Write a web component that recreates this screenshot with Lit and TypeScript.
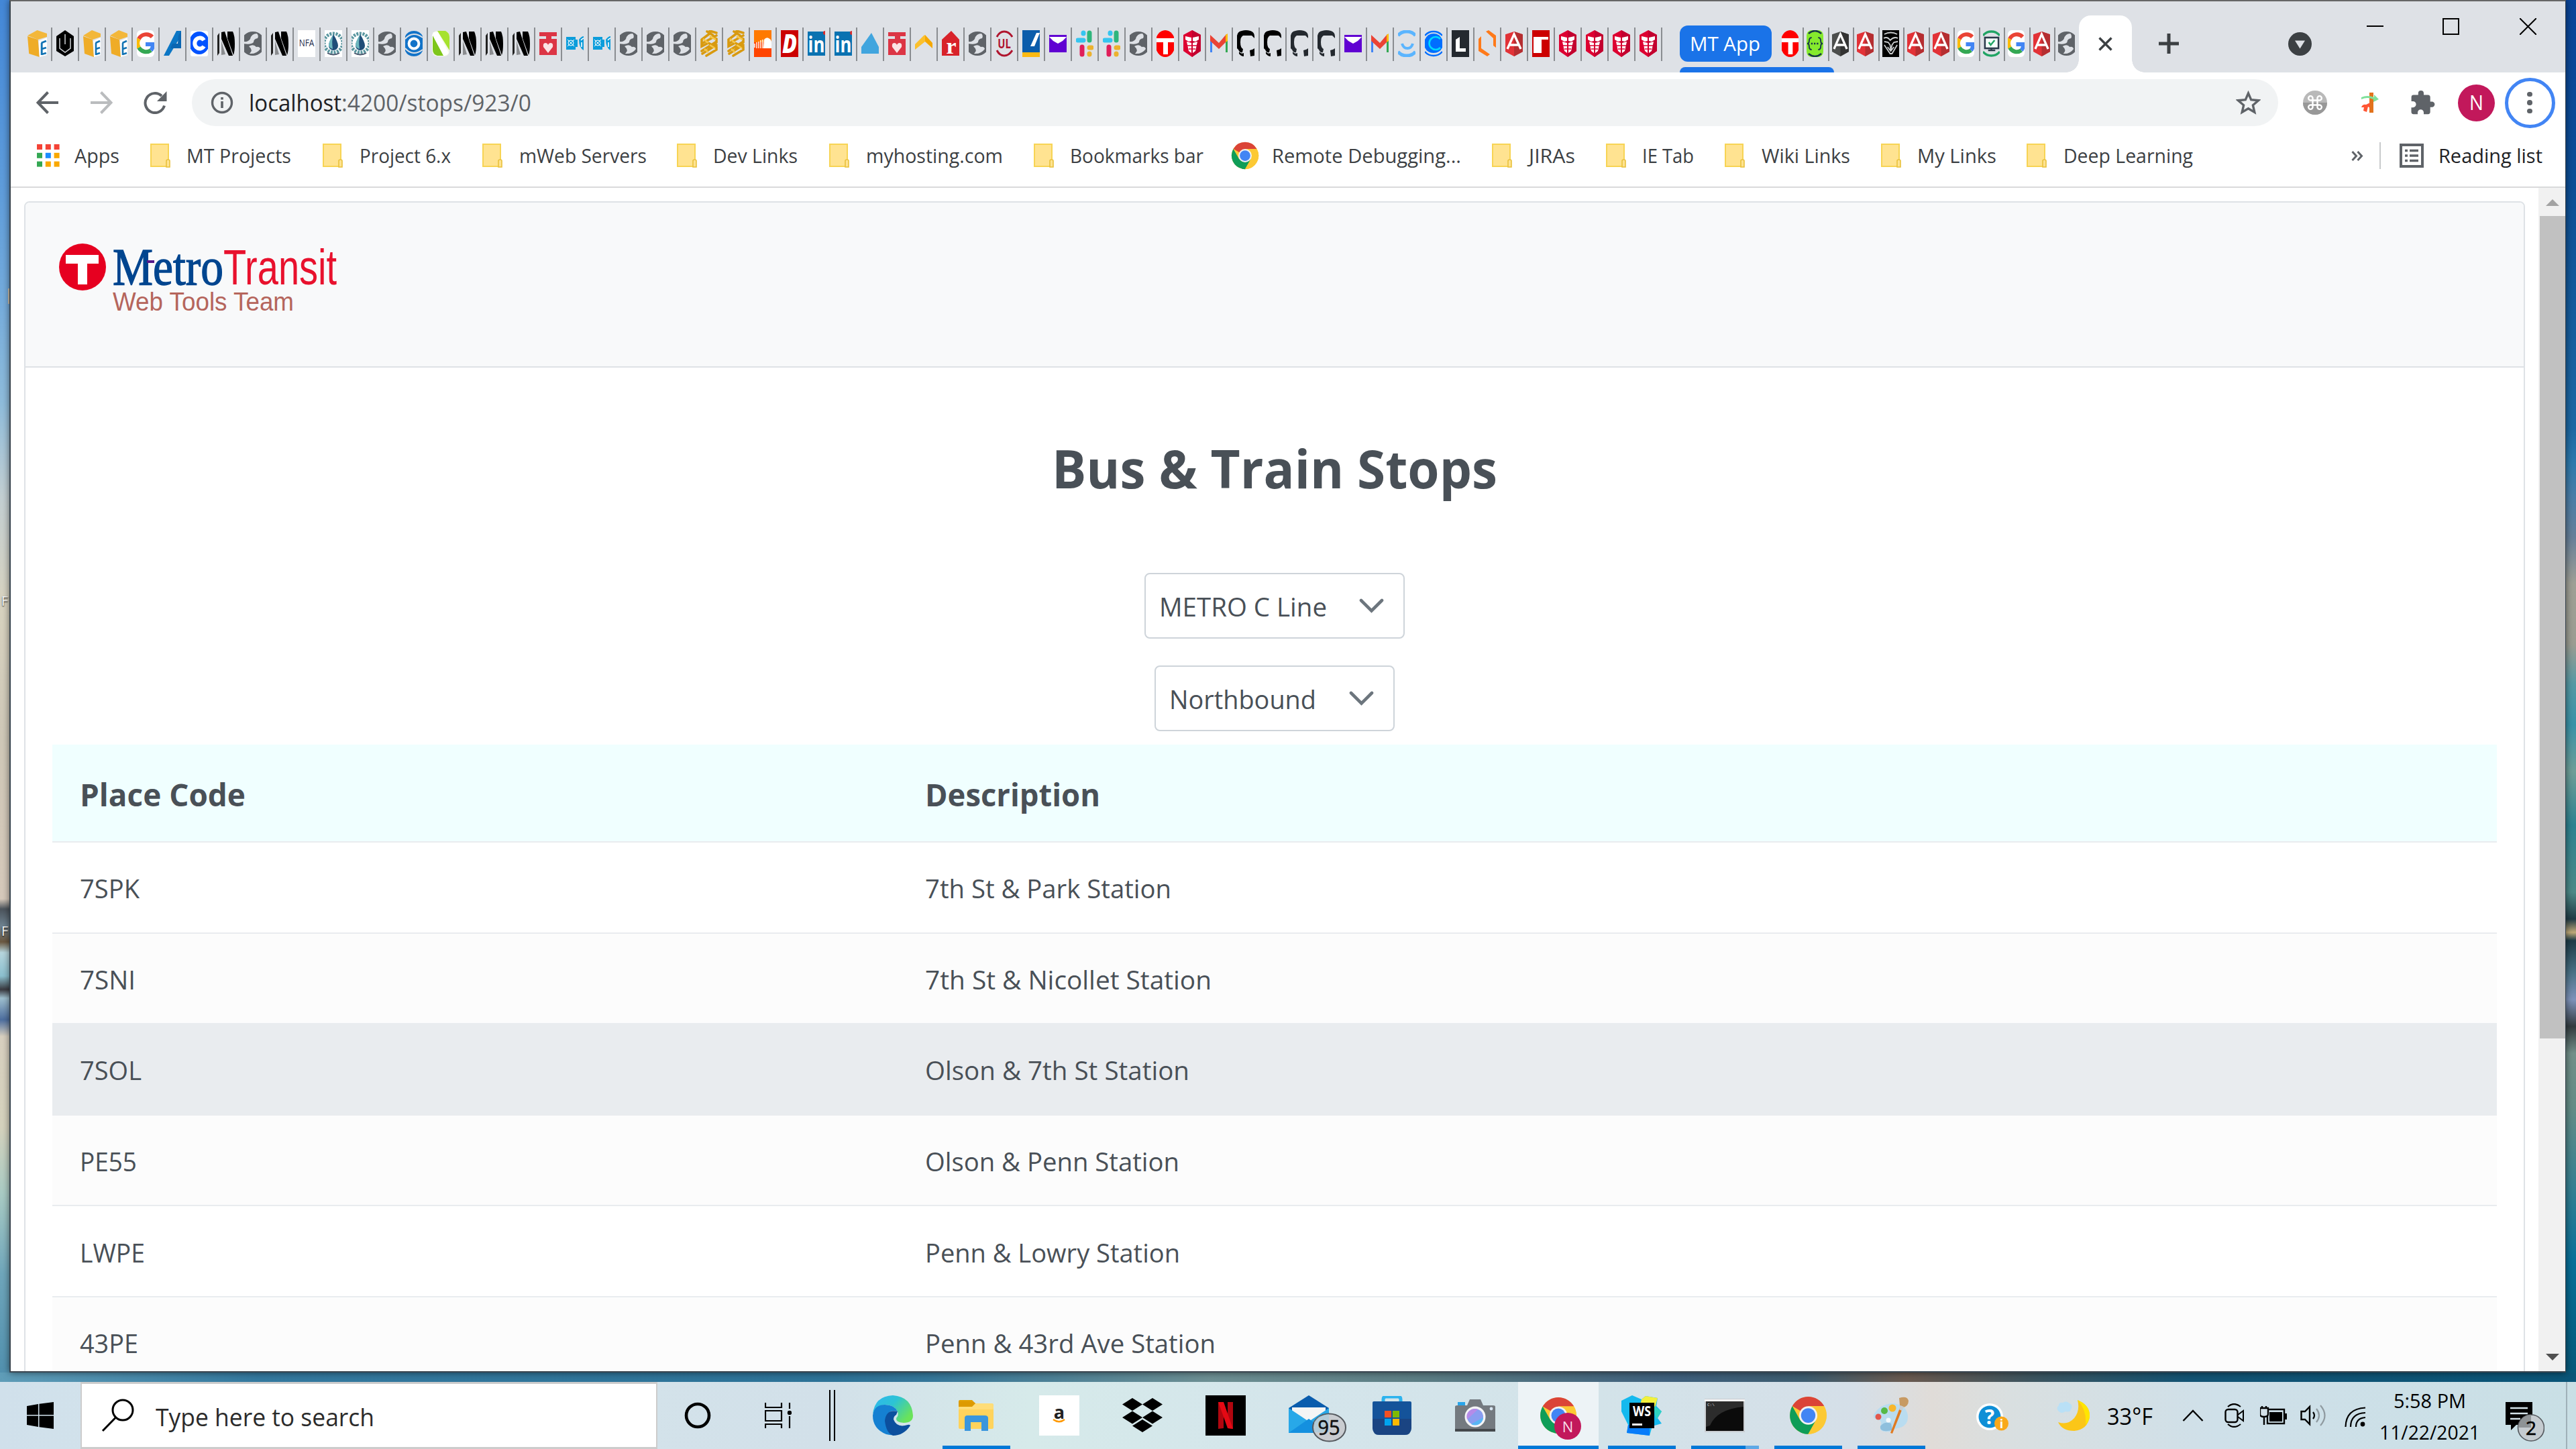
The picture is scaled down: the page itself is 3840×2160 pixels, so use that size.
import { LitElement, html, svg, css, nothing, type TemplateResult } from "lit";
import { customElement, property } from "lit/decorators.js";

/* ---------- text that is set to a given line width ---------- */

@customElement("fit-text")
export class FitText extends LitElement {
  @property() text = "";
  @property({ type: Number }) w = 0;

  static styles = css`
    :host { display: inline-block; flex: none; white-space: nowrap; line-height: 1.2; }
    .t { display: inline-block; transform-origin: 0 50%; white-space: pre; }
  `;

  render() {
    return html`<span class="t">${this.text}</span>`;
  }

  updated() {
    const t = this.renderRoot.querySelector(".t") as HTMLElement;
    t.style.transform = "none";
    const natural = t.getBoundingClientRect().width;
    this.style.width = this.w + "px";
    if (natural > 0) t.style.transform = `scaleX(${this.w / natural})`;
  }
}

const fit = (text: string, w: number, cls = "") =>
  html`<fit-text class=${cls} .text=${text} .w=${w}></fit-text>`;

const icon = (w: number, h: number, body: unknown, vb = `0 0 ${w} ${h}`) =>
  html`<svg class="ico" width=${w} height=${h} viewBox=${vb} preserveAspectRatio="none">${body}</svg>`;

/* ---------- favicons, drawn on a 26 x 40 strip ---------- */

const letter = (t: string, x: number, y: number, size: number, fill: string, extra = "") =>
  svg`<text x=${x} y=${y} font-size=${size} fill=${fill} text-anchor="middle" font-family="Open Sans, sans-serif" style=${"font-weight:700;" + extra}>${t}</text>`;

const narrow = (x: number, y: number, k: number, body: unknown) =>
  svg`<g transform=${`translate(${x} ${y}) scale(${k} 1)`}>${body}</g>`;

const angular = (a: string, b: string) => svg`
  <path d="M13 2 L31 8 L28 31 L13 39 L-2 31 L-5 8Z" fill=${a}/>
  <path d="M13 2 L31 8 L28 31 L13 39Z" fill=${b}/>
  <path d="M3 28 L13 6 L23 28 M7 22 H19" fill="none" stroke="#fff" stroke-width="3.4"/>`;

const nLogo = svg`
  <path d="M0 8 L3 4 V34 L0 38Z" fill="#222"/>
  <path d="M6 3 L11 2 L23 38 H17 L6 13Z" fill="#000"/>
  <path d="M15 2 H23 Q26 8 26 20 T24 37 L15 12Z" fill="#000"/>
  <path d="M6 16 L12 36 L6 37Z" fill="#8b8d90"/>`;

const octo = (c: string) => svg`
  <path d="M0 20 V8 Q1 2 7 1 Q13 -1 20 1 Q26 3 26 9 V12 L22 8 H9 Q5 10 5 18 Q5 26 9 28 L8 33 Q4 34 2 29 L0 27Z" fill=${c}/>
  <path d="M3 32 Q6 36 10 34 V39 Q6 39 3 35Z M19 30 Q24 29 26 27 V38 L20 39Z" fill=${c}/>`;

const FAV: Record<string, unknown> = {
  box: svg`<path d="M0 8 L13 0 L26 5 V10 L14 14Z" fill="#f3b73a"/><path d="M0 9 L14 14 L16 40 L2 35Z" fill="#efac27"/>
    <path d="M15 16 L26 11 V37 L16 40Z" fill="#fff"/><path d="M18.5 19 L25 16 M19 19 V37 M19 28 L25 26 M19 36 L25 34" stroke="#1273b4" stroke-width="2.6" fill="none"/>`,
  hex: svg`<path d="M13 0 L26 9 V31 L13 39 L0 31 V9Z" fill="#000"/><path d="M13 6 V21 M5 12 V27 L13 33 L21 27 V12" stroke="#cfd2d6" stroke-width="1.5" fill="none"/>`,
  g: svg`<rect width="26" height="40" rx="6" fill="#fff"/>
    <g fill="none" stroke-width="6"><path d="M23 10 A12.5 12.5 0 0 0 3 13" stroke="#ea4335"/><path d="M3 13 A12.5 12.5 0 0 0 3 26" stroke="#fbbc05"/><path d="M3 26 A12.5 12.5 0 0 0 21 30" stroke="#34a853"/><path d="M21 30 Q24 27 24 21 H13" stroke="#4285f4"/></g>`,
  slantA: svg`<path d="M0 38 L19 1 H26 V8 L8 38Z" fill="#0b76c5"/><path d="M22 8 L26 1 V27 H10 L13 20 H21Z" fill="#0a66b2"/>`,
  coin: svg`<rect x="0" y="1" width="26" height="38" rx="3" fill="#fff"/><ellipse cx="13" cy="19" rx="15" ry="17" fill="#0052ff"/><path d="M20 15 A7.5 8 0 1 0 20 24" stroke="#fff" stroke-width="6" fill="none"/>`,
  n: nLogo,
  globe: svg`<circle cx="13" cy="20" r="18" fill="#5f6368"/><path d="M-1 17 Q6 18 9 13 Q11 5 19 5 Q22 8 20 12 Q14 13 14 18 Q10 22 -1 20Z" fill="#dee1e6"/><path d="M7 24 Q14 20 18 25 Q23 24 24 28 Q18 36 8 35 Q14 30 7 24Z" fill="#dee1e6"/>`,
  nfa: svg`<rect width="26" height="40" fill="#fff"/>${narrow(13, 24, 0.85, letter("NFA", 0, 0, 14, "#1b2a4a", "font-weight:400"))}`,
  drop: svg`<rect width="26" height="40" fill="#fff"/><circle cx="13" cy="19" r="14" fill="none" stroke="#5b97a0" stroke-width="5" stroke-dasharray="3 1.6"/><path d="M13 6 Q20 18 20 23 A7 7 0 0 1 6 23 Q6 18 13 6Z" fill="#1f4d78"/><path d="M13 6 Q10 16 12 28 Q6 26 6 22 Q6 17 13 6Z" fill="#6db7be"/><path d="M4 34 Q13 39 22 34" stroke="#46536a" stroke-width="2" fill="none"/>`,
  ring: svg`<path d="M0 9 Q4 1 13 1 T26 9 V31 Q22 39 13 39 T0 31Z" fill="#1273c8"/><path d="M26 11 Q20 6 13 6 T0 13 M26 29 Q20 34 13 34 T0 27" stroke="#dee1e6" stroke-width="2" fill="none"/><circle cx="13" cy="20" r="7.4" fill="none" stroke="#fff" stroke-width="4"/>`,
  greenN: svg`<rect y="1" width="26" height="38" rx="8" fill="#f3f9e8"/><path d="M2 3 H9 L25 34 Q22 38 17 38 L3 12 V35 L0 30 V8Z" fill="#fff"/><path d="M8 1 H20 Q26 4 26 10 V30Z" fill="#a6e22e"/><path d="M1 8 L17 38 H8 Q1 36 1 29Z" fill="#7ec61a"/>`,
  heart: svg`<path d="M0 3 H26 V9 H18 V13 H26 V37 H0 V13 H10 V9 H0Z" fill="#dc3545"/><path d="M13 34 L6 25 Q5 19 9 19 Q12 19 13 22 Q14 19 17 19 Q21 19 20 25Z" fill="#fbe3e5"/>`,
  bcbs: svg`<path d="M0 10 H14 V14 H17 V25 H14 V29 H0Z" fill="#0c9ddb"/><path d="M2 14 L12 24 M12 14 L2 24" stroke="#fff"/><circle cx="7" cy="19" r="4" fill="none" stroke="#fff"/><path d="M19 14 Q23 9 26 9 V30 Q19 26 19 14Z" fill="#0c9ddb"/><path d="M22 15 Q25 12 26 12 M23 18 V25" stroke="#fff" stroke-width="1.6" fill="none"/>`,
  knot: svg`<g fill="none" stroke="#d89a10" stroke-width="3.6" stroke-linecap="round"><path d="M10 2 L18 7 L24 13 V18 L12 26 M24 4 L14 1 M2 14 L14 5 M2 20 L24 8 M2 14 V24 L12 19 L24 26 M2 31 L24 17 M3 35 L24 22 M9 38 L24 29 V24"/></g><path d="M4 13 L12 19 M14 9 L23 14 M6 28 L12 33 M14 22 L22 27" stroke="#f6c749" stroke-width="2.6" fill="none"/>`,
  cloud: svg`<rect width="26" height="40" fill="#ff4400"/><rect width="26" height="18" fill="#ff7a00"/><path d="M15 14 Q18 10 22 12 T26 18 V27 H14Z" fill="#fff"/><path d="M1 20 V26 M4 18 V27 M7 17 V27 M10 15 V27 M13 14 V27" stroke="#fff" stroke-width="1.4"/>`,
  bigD: svg`<rect width="26" height="40" fill="#cb0000"/>${narrow(13, 34, 0.85, letter("D", 0, 0, 38, "#fff", "font-style:italic;font-weight:800"))}`,
  linkedin: svg`<rect y="2" width="26" height="36" fill="#0a72b1"/>${narrow(13, 33, 0.78, letter("in", 0, 0, 33, "#fff"))}<circle cx="26" cy="4" r="3" fill="#d92b2b"/>`,
  tri: svg`<path d="M15 4 L26 25 V35 H0 V25Z" fill="#41a5de"/>`,
  wing: svg`<path d="M0 21 L13 8 L15 7 V17 L0 29Z" fill="#fbc02d"/><path d="M15 7 L26 19 V27 L15 17Z" fill="#f5a800"/>`,
  house: svg`<path d="M14 1 L26 14 V38 H0 V14Z" fill="#d8222a"/><text x="14" y="35" font-size="34" font-family="Liberation Serif, serif" fill="#fff" text-anchor="middle" style="font-weight:700">r</text>`,
  ul: svg`<path d="M2 10 Q6 2 13 2 T25 10 M2 30 Q6 38 13 38 T25 30" stroke="#b0152e" stroke-width="3" fill="none"/>${narrow(13, 27, 0.78, letter("UL", 0, 0, 19, "#b0152e"))}`,
  bluey: svg`<rect width="26" height="40" fill="#0a5cab"/><rect y="33" width="26" height="7" fill="#fdb913"/><path d="M12 24 L21 4 H26 L18 24Z" fill="#fff"/>`,
  mail: svg`<rect y="7" width="26" height="26" fill="#6001d2"/><path d="M0 10 H26 L20 16 L13 20 L6 16Z" fill="#fff"/>`,
  slack: svg`<g stroke-width="7" stroke-linecap="round"><path d="M3 15 H11" stroke="#36c5f0"/><path d="M11 4 V5" stroke="#36c5f0"/><path d="M20 4 V15" stroke="#2eb67d"/><path d="M9 25 V36 M3 25" stroke="#e01e5a"/><path d="M20 26 H23 M20 35 V36" stroke="#ecb22e"/></g>`,
  tRed: svg`<ellipse cx="13" cy="20" rx="15" ry="20" fill="#f00"/><path d="M0 12 H26 V18 H17 V36 H10 V18 H0Z" fill="#fff"/>`,
  prime: svg`<path d="M13 0 L26 7 V31 L13 40 L0 31 V7Z" fill="#dd0031"/><path d="M13 0 L26 7 V31 L13 40Z" fill="#c3002f"/><path d="M3 9 L12 11 V16 L8 17 L3 14Z M23 9 L14 11 V16 L18 17 L23 14Z M5 17 L12 19 V34 L8 31Z M21 17 L14 19 V34 L18 31Z" fill="#fff"/><path d="M6 23 L20 23 M8 28 H18" stroke="#dd0031" stroke-width="1.5"/>`,
  gmail: svg`<path d="M0 14 H3 V33 H0Z" fill="#4285f4"/><path d="M23 14 H26 V33 H23Z" fill="#34a853"/><path d="M0 7 L13 19 L24 6 V17 L13 28 L0 16Z" fill="#ea4335"/><path d="M23 7 L26 5 V16 L23 18Z" fill="#fbbc05"/>`,
  hubB: octo("#000"),
  hubG: octo("#24292f"),
  smile: svg`<path d="M0 8 Q5 2 13 2 T26 8 M0 32 Q5 38 13 38 T26 32" stroke="#5bb5ff" stroke-width="5" fill="none"/><path d="M6 20 Q8 27 14 27 T22 20" stroke="#5bb5ff" stroke-width="4" fill="none"/>`,
  cyan: svg`<path d="M0 8 Q5 2 13 2 T26 8 M0 32 Q5 38 13 38 T26 32" stroke="#006eff" stroke-width="2.4" fill="none"/><path d="M0 14 Q4 5 13 5 T26 14 V26 Q22 34 13 34 T0 26Z" fill="#006eff"/><path d="M23 13 A9.5 9.5 0 1 0 23 26" stroke="#00d9ff" stroke-width="2.6" fill="none"/>`,
  bigL: svg`<rect width="26" height="40" fill="#24292f"/><path d="M6 14 L12 10 V27 H21 V32 H6Z" fill="#fff"/>`,
  orange: svg`<path d="M0 13 L4 9 V27 L17 36 L13 39 L0 31Z M11 2 L15 0 L26 8 V26 L22 23 V12Z" fill="#ff7a1a"/>`,
  ngRed: angular("#e23237", "#b52e31"),
  ngDark: angular("#4d4f4e", "#333"),
  tSquare: svg`<rect width="26" height="40" fill="#cc0000"/><path d="M2 10 H24 V14 H14 V34 H2Z" fill="#fff"/>`,
  swagger: svg`<rect width="26" height="40" rx="8" fill="#85ea2d"/><path d="M3 5 Q13 -3 23 5 M3 35 Q13 43 23 35" stroke="#173647" stroke-width="2.5" fill="none"/><path d="M8 11 Q4 11 4 16 Q4 20 1 20 Q4 20 4 24 Q4 29 8 29 M18 11 Q22 11 22 16 Q22 20 25 20 Q22 20 22 24 Q22 29 18 29" fill="none" stroke="#173647" stroke-width="2"/><path d="M7 20 H20" stroke="#173647" stroke-width="2.4" stroke-dasharray="2.4 2"/>`,
  mask: svg`<rect width="26" height="40" fill="#000"/><path d="M3 6 Q13 1 23 6 M2 12 Q8 9 12 15 Q18 9 24 12 M3 17 L9 18 L12 22 L13 30 L15 22 L18 18 L24 17 M3 22 L12 35 H15 L23 22 M8 25 L13 31 L18 25" stroke="#cdd0d2" stroke-width="1.8" fill="none"/>`,
  monitor: svg`<path d="M0 8 Q5 2 13 2 T26 8 M0 32 Q5 38 13 38 T26 32" stroke="#20a464" stroke-width="3.4" fill="none"/><rect x="3" y="11" width="21" height="16" fill="#f5fffa" stroke="#2b3b4b" stroke-width="2.6"/><path d="M9 18 L12 22 L18 15" fill="none" stroke="#20a464" stroke-width="2.6"/><path d="M13 27 V30 M8 30 H19" stroke="#2b3b4b" stroke-width="2.4"/>`,
};

const TABS = (
  "box hex box box g slantA coin n globe n nfa drop drop globe ring greenN n n n heart bcbs bcbs " +
  "globe globe globe knot knot cloud bigD linkedin linkedin tri heart wing house globe ul bluey mail slack slack globe tRed " +
  "prime gmail hubB hubB hubG hubG mail gmail smile cyan bigL orange ngRed tSquare prime prime prime prime"
).split(" ");
const GROUP = "tRed swagger ngDark ngRed mask ngRed ngRed g monitor g ngRed globe".split(" ");

/* ---------- shared artwork ---------- */

const chromeBall = (w: number, h = w) => icon(w, h, svg`
  <circle cx="24" cy="24" r="23" fill="#fcc934"/>
  <path d="M24 24 L4 12.5 A23 23 0 0 1 44 12.5 L24 12.5Z" fill="#db4437"/>
  <path d="M4 12.5 L14 30 L24 35 L20 46.6 A23 23 0 0 1 4 12.5Z" fill="#0f9d58"/>
  <path d="M14 29.6 L24 34.5 L33.5 30 L24 47 A23 23 0 0 1 19 46.5Z" fill="#0f9d58"/>
  <path d="M24 12.5 H44 A23 23 0 0 1 24 47 L34 30Z" fill="#fcc934"/>
  <circle cx="24" cy="24" r="11.4" fill="#f1f1f1"/><circle cx="24" cy="24" r="9" fill="#4285f4"/>`, "0 0 48 48");

const folder = icon(30, 36, svg`
  <path d="M1 1 H27 V34 H1Z" fill="#ffe391" stroke="#f7d454" stroke-width="2"/>
  <path d="M24 35 V26 Q24 24 26 24 H27 Q29 24 29 26 V35Z" fill="#ffe391" stroke="#e9c13c" stroke-width="1.6"/>`);

const apps9 = icon(34, 34, svg`${[
  ["#f44336", "#f44336", "#f44336"],
  ["#34a853", "#1a8cff", "#f9a800"],
  ["#34a853", "#f9a800", "#f9a800"],
].map((r, y) => r.map((c, x) => svg`<rect x=${x * 12.8} y=${y * 12.8} width="8" height="8" fill=${c}/>`))}`);

interface Mark { label: string; pitch: number; gap: number; w: number; kind?: string }
const MARKS: Mark[] = [
  { label: "Apps", pitch: 169, gap: 22, w: 67, kind: "apps" },
  { label: "MT Projects", pitch: 257, gap: 24, w: 156 },
  { label: "Project 6.x", pitch: 238, gap: 25, w: 136 },
  { label: "mWeb Servers", pitch: 290, gap: 25, w: 190 },
  { label: "Dev Links", pitch: 227, gap: 24, w: 126 },
  { label: "myhosting.com", pitch: 305, gap: 25, w: 204 },
  { label: "Bookmarks bar", pitch: 294, gap: 24, w: 199 },
  { label: "Remote Debugging...", pitch: 389, gap: 19, w: 282, kind: "chrome" },
  { label: "JIRAs", pitch: 170, gap: 25, w: 69 },
  { label: "IE Tab", pitch: 177, gap: 24, w: 77 },
  { label: "Wiki Links", pitch: 233, gap: 25, w: 132 },
  { label: "My Links", pitch: 217, gap: 24, w: 118 },
  { label: "Deep Learning", pitch: 484, gap: 25, w: 193 },
];

const STOPS: [string, number, string, number][] = [
  ["7SPK", 89, "7th St & Park Station", 367],
  ["7SNI", 83, "7th St & Nicollet Station", 427],
  ["7SOL", 92, "Olson & 7th St Station", 394],
  ["PE55", 85, "Olson & Penn Station", 379],
  ["LWPE", 97, "Penn & Lowry Station", 380],
  ["43PE", 87, "Penn & 43rd Ave Station", 433],
];

/* ---------- taskbar artwork ---------- */

const TASKS: { art: TemplateResult; run?: string }[] = [
  { art: icon(60, 60, svg`
      <defs><linearGradient id="e1" x1="0" y1="0" x2="1" y2=".6"><stop offset="0" stop-color="#2fb6f0"/><stop offset=".5" stop-color="#2cc3d5"/><stop offset="1" stop-color="#6ae35a"/></linearGradient></defs>
      <path d="M0 28 Q3 1 30 0 Q58 2 60 30 Q60 41 46 41 Q34 40 35 34 Q39 30 37 24 Q32 14 18 14 Q5 15 0 28Z" fill="url(#e1)"/>
      <path d="M0 30 Q2 14 18 14 Q32 14 37 24 Q22 20 21 34 Q22 52 42 52 Q34 62 20 58 Q0 50 0 30Z" fill="#1580d2"/>
      <path d="M37 24 Q20 20 18 38 Q20 56 30 60 Q46 60 56 45 Q55 43 52 44 Q36 49 31 36 Q31 31 35 29Z" fill="#0c4f9e"/>`) },
  { run: "on", art: icon(52, 46, svg`
      <path d="M0 2 Q0 0 2 0 H20 L25 5 V12 H0Z" fill="#e2a100"/><rect y="6" width="52" height="37" rx="2" fill="#ffd35c"/><path d="M0 6 H22 L26 5 H50 Q52 5 52 8 V14 H0Z" fill="#ffdd78"/><path d="M0 2 H20 L25 5 L20 10 H0Z" fill="#dd9a00"/>
      <path d="M9 46 V27 Q9 23 13 23 H39 Q44 23 44 27 V46 H34 V33 H18 V46Z" fill="#3a96dd"/>`) },
  { art: icon(60, 60, svg`
      <rect width="60" height="60" fill="#fff"/>${letter("a", 30, 34.5, 27, "#222")}<path d="M21 36 Q30 42.5 38 36" fill="none" stroke="#ff9900" stroke-width="2.4"/>`) },
  { art: icon(60, 52, svg`
      <path d="M15 0 L30 9.5 L15 19 L0 9.5Z M45 0 L60 9.5 L45 19 L30 9.5Z M15 19.5 L30 29 L15 38.5 L0 29Z M45 19.5 L60 29 L45 38.5 L30 29Z M30 32 L45 41.5 L30 51 L15 41.5Z" fill="#000"/>`) },
  { art: icon(60, 60, svg`
      <rect width="60" height="60" fill="#000"/><path d="M19 10 H27 V49 L19 50Z M33 10 H41 V50 L33 49Z" fill="#b1060f"/><path d="M19 10 H27 L41 50 L33 49Z" fill="#e50914"/>`) },
  { art: icon(88, 72, svg`
      <path d="M0 20 L30 1 L60 20 V57 H0Z" fill="#0a5cad"/><path d="M5 19 H55 V40 H5Z" fill="#f5f5f5"/><path d="M0 20 L30 40 L60 20 V57 H0Z" fill="#28a8e8"/><path d="M0 57 L30 36 L60 57Z" fill="#1490df"/>
      <ellipse cx="60.5" cy="49" rx="24.5" ry="20.5" fill="#c9ccd0" stroke="#55595e" stroke-width="2"/><path d="M38 41 Q44 30 60 29 V56 H38Z" fill="#a9cbdc" opacity=".7"/>
      <text x="60" y="60" font-size="31" text-anchor="middle" fill="#111" stroke="#111" stroke-width=".6" font-family="Open Sans, sans-serif" textLength="33" lengthAdjust="spacingAndGlyphs">95</text>`, "0 0 88 72") },
  { art: icon(58, 58, svg`
      <path d="M16 13 V5 Q16 1 20 1 H38 Q42 1 42 5 V13" fill="none" stroke="#2cb3ee" stroke-width="5"/><path d="M0 10 Q0 8 2 8 H56 Q58 8 58 10 V48 Q57 58 48 58 H10 Q1 58 0 48Z" fill="#14539a"/><path d="M0 34 H58 V48 Q57 58 48 58 H10 Q1 58 0 48Z" fill="#1c3f77" opacity=".7"/>
      <rect x="18" y="22" width="10" height="10" fill="#f25022"/><rect x="30" y="22" width="10" height="10" fill="#7fba00"/><rect x="18" y="34" width="10" height="10" fill="#00a4ef"/><rect x="30" y="34" width="10" height="10" fill="#ffb900"/>`) },
  { art: icon(60, 48, svg`
      <rect x="4" y="4" width="11" height="8" fill="#29a5ea"/><path d="M0 11 Q0 9 3 9 H18 L22 0 H38 L42 9 H57 Q60 9 60 11 V46 H0Z" fill="#747a80"/><rect y="44" width="60" height="4" fill="#44484c"/>
      <circle cx="30" cy="26" r="15.5" fill="#f4f4f6"/><circle cx="30" cy="26" r="12" fill="#8a9df0"/><path d="M18 30 A12 12 0 0 1 34 15Z" fill="#b58be8"/><path d="M42 27 A12 12 0 0 1 24 37Z" fill="#58b6f4"/><circle cx="54" cy="14" r="2.4" fill="#d8e6f2"/>`) },
  { run: "active", art: html`<span class="duo">${chromeBall(56)}<span class="who">N</span></span>` },
  { run: "on", art: icon(60, 60, svg`
      <path d="M0 8 L16 0 L30 6 L36 1 L54 4 L52 16 L60 24 L54 34 L60 42 L46 46 L42 60 L8 56 L10 44 L0 24Z" fill="#14b9ee"/><path d="M30 6 L36 1 L54 4 L50 18 L28 14Z" fill="#f3f03c"/><path d="M10 44 L42 44 L42 60 L8 56Z" fill="#087cfa"/><path d="M46 14 L60 24 L52 36Z" fill="#2fd3c0"/>
      <rect x="12" y="11" width="37" height="38" fill="#000"/>${narrow(30.5, 31, 0.85, letter("WS", 0, 0, 21, "#fff"))}<rect x="16" y="42" width="15" height="3" fill="#fff"/>`) },
  { run: "double", art: icon(60, 50, svg`
      <rect width="60" height="50" fill="#c9cdd1"/><rect y="1" width="60" height="3" fill="#f4f4f4"/><rect x="2" y="4" width="56" height="44" fill="#0b0b0b"/><path d="M2 4 H58 V12 Q18 16 8 40 L2 42Z" fill="#2c2c2c"/>
      <text x="4" y="11" font-size="6" fill="#ddd" font-family="Liberation Mono, monospace">C:\\</text>`) },
  { run: "on", art: chromeBall(57, 58) },
  { run: "on", art: icon(56, 56, svg`
      <path d="M28 10 Q50 10 53 28 Q54 42 42 46 Q30 48 26 52 Q10 54 12 44 Q16 36 8 34 Q-2 32 4 24 Q12 12 28 10Z" fill="#b9dcf0"/><path d="M12 44 Q18 36 28 40 L30 50 Q10 54 12 44Z" fill="#8fbfdd"/>
      <circle cx="9" cy="30" r="4.5" fill="#e2574c"/><circle cx="18" cy="21" r="5" fill="#57b947"/><circle cx="30" cy="17" r="5.5" fill="#f8b62c"/><circle cx="24" cy="35" r="3.5" fill="#f4f8fb"/>
      <path d="M42 14 L46 15 L30 55 L27 54Z" fill="#e07b22"/><path d="M40 2 Q52 -2 54 6 Q54 14 46 16 L41 13Z" fill="#c79a63"/><path d="M42 13 L47 15 L44 21 L40 19Z" fill="#c9ced2"/>`) },
];

@customElement("app-root")
export class AppRoot extends LitElement {
  static styles = css`
    :host { display: block; width: 3840px; height: 2160px; overflow: hidden; font-family: "Open Sans", "Noto Sans", sans-serif; color: #495057; }
    * { box-sizing: border-box; }
    .ico { display: block; flex: none; overflow: hidden; }
    .screen { display: flex; flex-direction: column; width: 3840px; height: 2160px; }
    .desktop {
      flex: none; height: 2060px; padding: 0 14px 14px 14px; position: relative;
      background:
        linear-gradient(180deg, #4488d8 0, #5f9ddb 280px, #74abdc 440px, #8fbcdb 600px, #c3cfd2 740px, #d8d3c0 900px, #cfc8b8 1100px, #d6c9bb 1340px, #4c545c 1355px, #6e8290 1380px, #6b5840 1404px, #b7d6de 1420px, #8cc0cf 1455px, #3a3a40 1475px, #9fc0cf 1488px, #4d6e9f 1520px, #d8d0c0 1545px, #d5d2bd 1680px, #a9cbc4 1780px, #6fa6bb 1900px, #4f8fae 2060px) 0 0 / 1920px 2046px no-repeat,
        linear-gradient(180deg, #0a459a 0, #0d4f96 280px, #1d69a4 640px, #2d7aad 690px, #4a7ea8 740px, #66809a 800px, #a0a096 870px, #9b9d92 960px, #559aa5 1020px, #3a93a8 1080px, #6f9f98 1150px, #2d8391 1230px, #4d8a88 1330px, #203c46 1370px, #c0aa78 1390px, #1d3c48 1402px, #4a7387 1450px, #7f94bb 1490px, #333c40 1530px, #73908a 1570px, #648d87 1650px, #327f93 1780px, #087099 1880px, #075777 2060px) 1920px 0 / 1920px 2046px no-repeat,
        linear-gradient(90deg, #5f9db8 0, #34799f 10%, #2d7398 32%, #35779a 36%, #6d8f93 47%, #5c7e85 55%, #3f607d 65%, #3d5d70 70%, #6a5a50 74%, #3c5560 79%, #135474 85%, #0a5578 100%);
    }
    .stray { position: absolute; left: 2px; color: #fff; font-size: 20px; line-height: 30px; text-shadow: 0 1px 2px #000; }
    .s1 { top: 881px; } .s2 { top: 1373px; }
    .stray-icon { position: absolute; left: 12px; top: 430px; width: 2px; height: 23px; background: #d8c7ae; }
    .window { position: relative; display: flex; flex-direction: column; width: 3811px; height: 2046px; border: 2px solid #3a4650; border-right-width: 1px; border-top-color: #666; background: #fff; box-shadow: 0 0 10px rgba(0, 0, 0, .55); }

    /* tab strip */
    .strip { flex: none; display: flex; height: 106px; background: #dee1e6; padding-left: 22px; position: relative; }
    .tab { flex: none; width: 40px; height: 50px; margin-top: 39px; padding: 4px 0 0 6px; border-right: 2px solid #8a8d91; }
    .tab.first { padding-left: 3px; }
    .tab.g { width: 37.5px; padding-left: 4px; }
    .tab.last { border-right: 0; }
    .chip { flex: none; margin: 36px 10.5px 0 26px; width: 137px; height: 54px; border-radius: 12px; background: #1a73e8; color: #fff; display: flex; align-items: center; justify-content: center; font-size: 29px; }
    .chip fit-text { margin-left: -2px; }
    .underline { position: absolute; left: 2488px; top: 98px; width: 230px; height: 8px; border-radius: 8px 8px 0 0; background: #1a73e8; }
    .active { flex: none; position: relative; margin: 21px 0 0 -2.5px; width: 79px; height: 85px; border-radius: 18px 18px 0 0; background: #fff; display: flex; justify-content: center; padding-top: 32px; }
    .active::before, .active::after { content: ""; position: absolute; bottom: 0; width: 19px; height: 19px; }
    .active::before { left: -19px; background: radial-gradient(circle at 0 0, transparent 18.5px, #fff 19px); }
    .active::after { right: -19px; background: radial-gradient(circle at 100% 0, transparent 18.5px, #fff 19px); }
    .plus { margin: 48px 0 0 40px; }
    .drop { margin: 45.5px 0 0 162.5px; }
    .min { margin: 36px 0 0 82px; }
    .max { margin: 25px 0 0 88px; }
    .cls { margin: 25px 0 0 90px; }

    /* toolbar */
    .nav { flex: none; display: flex; align-items: center; height: 90px; padding-left: 37.5px; background: #fff; }
    .fwd { margin-left: 46px; } .rel { margin-left: 46px; }
    .omni { flex: none; display: flex; align-items: center; margin-left: 37px; width: 3110px; height: 70px; border-radius: 35px; background: #f1f3f4; padding: 0 26px 0 28px; font-size: 34px; color: #5f6368; }
    .host { color: #202124; margin-left: 23px; }
    .omni fit-text { margin-top: 1px; }
    .grow { flex: 1; }
    .cmdk { margin-left: 37px; } .sign { margin-left: 50px; } .puz { margin-left: 47px; }
    .avatar { flex: none; margin-left: 34px; width: 55px; height: 55px; border-radius: 50%; background: #c2185b; color: #fff; display: flex; align-items: center; justify-content: center; font-size: 31px; }
    .ring { flex: none; margin-left: 15px; width: 75px; height: 75px; border-radius: 50%; border: 5px solid #4285f4; display: flex; flex-direction: column; align-items: center; justify-content: center; gap: 5px; }
    .ring i { width: 7.6px; height: 7.6px; border-radius: 50%; background: #5f6368; }

    .marks { flex: none; display: flex; align-items: center; height: 82px; padding: 0 0 12px 38.5px; border-bottom: 2px solid #d9dadb; font-size: 29px; color: #3c4043; }
    .mark { flex: none; display: flex; align-items: center; }
    .mark fit-text { margin-top: 0; }
    .bar { width: 2px; height: 40px; background: #c8cacc; margin: 0 28px 0 24px; }
    .reading { margin: 0 0 0 22px; color: #202124; }

    /* page */
    .view { flex: 1; min-height: 0; display: flex; background: #fff; }
    .page { flex: 1; min-width: 0; overflow: hidden; padding: 20px 20px 0 20px; }
    .card { width: 3728px; height: 2000px; border: 2px solid #dee2e6; border-radius: 8px; overflow: hidden; }
    .head { display: flex; height: 246px; padding: 61px 0 0 50px; background: #f8f9fa; border-bottom: 2px solid #dee2e6; }
    .brand { position: relative; margin-left: 10px; padding-top: 2px; }
    .brandline { display: flex; height: 66px; align-items: flex-end; }
    .metro { font: 400 79px/66px "Liberation Serif", serif; -webkit-text-stroke: 1.4px #00458f; color: #00458f; height: 66px; }
    .transit { font: 400 75px/66px "Liberation Sans", sans-serif; color: #e8112d; height: 66px; }
    .team { font: 400 38px/40px "Liberation Sans", sans-serif; color: #b5655c; display: block; margin-top: -1px; }
    .dash { position: absolute; left: 51px; top: 25px; width: 11px; height: 4px; background: #551a8b; }
    .body { padding: 101px 40px 0 40px; display: flex; flex-direction: column; align-items: center; }
    .title { display: flex; align-items: center; height: 100px; margin: 0; font-size: 78px; font-weight: 700; }
    .sel { display: flex; align-items: center; justify-content: space-between; height: 98px; border: 2px solid #ced4da; border-radius: 8px; padding: 2px 29px 0 20px; font-size: 39px; background: #fff; }
    .sel .ico { margin-top: -2px; }
    .sel.a { width: 388px; margin-top: 105px; }
    .sel.b { width: 358px; margin-top: 40px; }
    .table { width: 100%; margin-top: 20px; }
    .row { display: grid; grid-template-columns: 1260px 1fr; align-items: center; height: 135.6px; border-bottom: 2px solid #e9ecef; padding: 2px 0 0 41px; font-size: 39px; background: #fff; }
    .row.odd { background: #fcfcfc; }
    .row.hover { background: #e9ecef; }
    .row.top { height: 146px; background: #f0ffff; font-size: 46px; font-weight: 700; padding-top: 4px; }
    .scroll { flex: none; width: 40px; background: #f1f1f1; display: flex; flex-direction: column; align-items: center; padding: 17px 0 16px 2px; }
    .thumb { width: 38px; height: 1226px; margin-top: 15px; background: #c1c1c1; }

    /* taskbar */
    .task { flex: none; display: flex; align-items: center; height: 100px; color: #000; background: linear-gradient(90deg, #d0e0eb 0, #d5e6ec 12%, #d2e0e9 32%, #d6eaea 40%, #d4e5eb 50%, #d3e3e9 62%, #d5dfe8 72%, #e0dcd8 75%, #d9dfe0 78%, #cfe0e9 86%, #c9dfe5 100%); }
    .slot { flex: none; width: 120px; display: flex; justify-content: center; }
    .search { flex: none; width: 860px; height: 100px; border: 3px solid #ccc; border-width: 3px 2px; background: #fff; display: flex; align-items: center; padding-left: 29px; color: #2b2b2b; font-size: 37px; }
    .search fit-text { margin: 4px 0 0 31px; }
    .lines { flex: none; width: 9px; height: 76px; border: 2px solid #000; border-width: 0 2px; margin: 0 24px 0 16px; }
    .app { flex: none; position: relative; width: 124px; height: 100px; display: flex; align-items: center; justify-content: center; }
    .app.on::after, .app.active-app::before, .app.double::after { content: ""; position: absolute; left: 11.5px; bottom: 0; width: 101px; height: 5px; background: #0078d7; }
    .app.double::after { background: linear-gradient(90deg, #0078d7 80%, #5fa9e6 80%); }
    .app.active-app::before { left: 2px; width: 120px; top: 0; height: auto; background: linear-gradient(0deg, #0078d7 5px, #edf3f6 5px); }
    .app.mailapp { padding-left: 27px; padding-top: 10px; }
    .duo { position: relative; display: block; }
    .who { position: absolute; left: 22px; top: 24px; width: 40px; height: 40px; border-radius: 50%; background: #c2185b; color: #f7dbe7; font-size: 22px; line-height: 40px; text-align: center; }
    .help { margin-left: 65px; margin-top: 5px; } .moon { margin-left: 72px; }
    .temp { margin: 2px 44px 0 26px; font-size: 35px; }
    .meet { margin-left: 31px; } .bat { margin-left: 23px; } .vol { margin-left: 20px; } .wifi { margin-left: 26px; margin-top: 4px; }
    .clock { flex: none; margin: 1px 0 0 19px; width: 151px; display: flex; flex-direction: column; align-items: center; font-size: 29px; gap: 12px; }
    .clock fit-text { height: 35px; line-height: 35px; }
    .note { margin-left: 38px; margin-top: 22px; }
    .peek { width: 2px; height: 100px; background: #9fb0b8; margin-left: 32px; }
  `;

  private tab(name: string, cls: string, i: number) {
    return html`<div class="tab ${cls}">${icon(cls.startsWith("g") ? 25 : i === 0 ? 29 : 26, 40, FAV[name] ?? nothing, "0 0 26 40")}</div>`;
  }

  private strip() {
    return html`<div class="strip">
      ${TABS.map((n, i) => this.tab(n, i === 0 ? "first" : "", i))}
      <div class="chip">${fit("MT App", 105)}</div>
      ${GROUP.map((n, i) => this.tab(n, i === GROUP.length - 1 ? "g last" : "g", i))}
      <div class="underline"></div>
      <div class="active">${icon(21, 21, svg`<path d="M1.5 1.5 L19.5 19.5 M19.5 1.5 L1.5 19.5" stroke="#3c4043" stroke-width="3.4"/>`)}</div>
      <div class="plus">${icon(30, 30, svg`<path d="M15 0 V30 M0 15 H30" stroke="#3c4043" stroke-width="5"/>`)}</div>
      <div class="drop">${icon(35, 35, svg`<circle cx="17.5" cy="17.5" r="17.5" fill="#3c4043"/><path d="M10 12.5 H25 L17.5 24.5Z" fill="#dee1e6"/>`)}</div>
      <div class="min">${icon(25, 2, svg`<rect width="25" height="2"/>`)}</div>
      <div class="max">${icon(25, 25, svg`<rect x="1" y="1" width="23" height="23" fill="none" stroke="#000" stroke-width="2"/>`)}</div>
      <div class="cls">${icon(25, 25, svg`<path d="M0 0 L25 25 M25 0 L0 25" stroke="#000" stroke-width="2"/>`)}</div>
    </div>`;
  }

  private nav() {
    return html`<div class="nav">
      ${icon(34, 34, svg`<path d="M33 17 H3 M17.5 1.5 L2.5 17 L17.5 32.5" fill="none" stroke="#5f6368" stroke-width="4"/>`)}
      <div class="fwd">${icon(34, 34, svg`<path d="M1 17 H31 M16.5 1.5 L31.5 17 L16.5 32.5" fill="none" stroke="#babcbe" stroke-width="4"/>`)}</div>
      <div class="rel">${icon(35, 34, svg`<path d="M31 21.5 A14.5 14.5 0 1 1 27 7" fill="none" stroke="#5f6368" stroke-width="4"/><path d="M34.5 0 V15 H20Z" fill="#5f6368"/>`)}</div>
      <div class="omni">
        ${icon(34, 34, svg`<circle cx="17" cy="17" r="14.5" fill="none" stroke="#5f6368" stroke-width="3.4"/><path d="M17 15 V25 M17 9 V12.6" stroke="#5f6368" stroke-width="3.6"/>`)}
        ${fit("localhost", 138, "host")}${fit(":4200/stops/923/0", 283)}
        <span class="grow"></span>
        ${icon(37, 36, svg`<path d="M18.5 4 L22.7 13.7 L33.5 14.7 L25.4 21.8 L27.8 32.3 L18.5 26.8 L9.2 32.3 L11.6 21.8 L3.5 14.7 L14.3 13.7Z" fill="none" stroke="#5f6368" stroke-width="3.4"/>`)}
      </div>
      <div class="cmdk">${icon(36, 36, svg`<circle cx="18" cy="18" r="18" fill="#b9b9b9"/><path d="M0 18 H36 A18 18 0 0 1 0 18Z" fill="#989898"/><path d="M14.5 14.5 H21.5 V21.5 H14.5Z M14.5 14.5 H12 A3.2 3.2 0 1 1 14.5 12Z M21.5 14.5 V12 A3.2 3.2 0 1 1 24 14.5Z M21.5 21.5 H24 A3.2 3.2 0 1 1 21.5 24Z M14.5 21.5 V24 A3.2 3.2 0 1 1 12 21.5Z" fill="none" stroke="#fff" stroke-width="2.4"/>`)}</div>
      <div class="sign">${icon(28, 30, svg`<rect x="13" width="6" height="30" fill="#e2731d"/><path d="M1 7 Q10 3 20 7 V3 L27 10 L19 14 V10 Q10 6 1 10Z" fill="#7fe09a"/><path d="M14 15 V23 L11 21 L9 29 L4 27 L5 22 L1 22 Q3 17 8 18Z" fill="#ff5533"/>`)}</div>
      <div class="puz">${icon(36, 36, svg`<path d="M31.2 16.4 H28.7 V10 Q28.7 6.5 25.2 6.5 H19 V4.2 A4.1 4.1 0 0 0 10.8 4.2 V6.5 H3.9 Q.6 6.5 .6 9.9 V16 H3 A4.6 4.6 0 0 1 3 25.2 H.5 V31.8 Q.5 35.2 3.9 35.2 H10 V32.7 A4.5 4.5 0 0 1 19 32.7 V35.2 H25.2 Q28.7 35.2 28.7 31.8 V24.8 H31.2 A4.2 4.2 0 0 0 31.2 16.4Z" fill="#5f6368"/>`)}</div>
      <div class="avatar">${fit("N", 21)}</div>
      <div class="ring"><i></i><i></i><i></i></div>
    </div>`;
  }

  private marks() {
    return html`<div class="marks">
      ${MARKS.map((m) => html`<div class="mark" style="width:${m.pitch}px">
        ${m.kind === "apps" ? apps9 : m.kind === "chrome" ? chromeBall(42) : folder}
        <span style="width:${m.gap}px"></span>${fit(m.label, m.w)}
      </div>`)}
      ${icon(18, 15, svg`<path d="M1.5 1 L7.5 7.5 L1.5 14 M9.5 1 L15.5 7.5 L9.5 14" stroke="#5f6368" stroke-width="3" fill="none"/>`)}
      <span class="bar"></span>
      ${icon(36, 36, svg`<rect x="2" y="2" width="32" height="32" fill="none" stroke="#5f6368" stroke-width="4"/><path d="M8 10.5 H12 M8 18 H12 M8 25.5 H12 M15 10.5 H28 M15 18 H28 M15 25.5 H28" stroke="#5f6368" stroke-width="3.6"/>`)}
      ${fit("Reading list", 155, "reading")}
    </div>`;
  }

  private select(label: string, w: number, cls: string) {
    return html`<div class="sel ${cls}">${fit(label, w)}
      ${icon(37, 22, svg`<path d="M3 3 L18.5 18.5 L34 3" stroke="#6c757d" stroke-width="4.6" stroke-linecap="round" fill="none"/>`)}
    </div>`;
  }

  private page() {
    return html`<div class="view">
      <div class="page"><div class="card">
        <div class="head">
          ${icon(70, 70, svg`<circle cx="35" cy="35" r="35" fill="#e60020"/><path d="M10 17 H59 V30 H42 V61 H28 V30 H10Z" fill="#fff"/>`)}
          <div class="brand">
            <div class="brandline">${fit("Metro", 165, "metro")}${fit("Transit", 169, "transit")}</div>
            ${fit("Web Tools Team", 270, "team")}
            <i class="dash"></i>
          </div>
        </div>
        <div class="body">
          <h1 class="title">${fit("Bus & Train Stops", 664)}</h1>
          ${this.select("METRO C Line", 250, "a")}
          ${this.select("Northbound", 219, "b")}
          <div class="table">
            <div class="row top"><div>${fit("Place Code", 247)}</div><div>${fit("Description", 261)}</div></div>
            ${STOPS.map(([c, cw, d, dw], i) => html`
              <div class="row ${i === 2 ? "hover" : i % 2 ? "odd" : ""}"><div>${fit(c, cw)}</div><div>${fit(d, dw)}</div></div>`)}
          </div>
        </div>
      </div></div>
      <div class="scroll">
        ${icon(20, 10, svg`<path d="M0 10 L10 0 L20 10Z" fill="#a3a3a3"/>`)}
        <div class="thumb"></div><span class="grow"></span>
        ${icon(20, 10, svg`<path d="M0 0 L10 10 L20 0Z" fill="#505050"/>`)}
      </div>
    </div>`;
  }

  private taskbar() {
    return html`<div class="task">
      <div class="slot">${icon(40, 40, svg`<path d="M0 6 L17 3 V19 H0Z M18.5 2.7 L40 0 V19 H18.5Z M0 20.5 H17 V37 L0 34Z M18.5 20.5 H40 V40 L18.5 37.3Z"/>`)}</div>
      <div class="search">${icon(50, 50, svg`<circle cx="32" cy="17" r="15" fill="none" stroke="#000" stroke-width="3"/><path d="M21.5 28 L2 48" stroke="#000" stroke-width="3"/>`)}${fit("Type here to search", 326)}</div>
      <div class="slot">${icon(40, 40, svg`<circle cx="20" cy="20" r="17" fill="none" stroke="#000" stroke-width="4.6"/>`)}</div>
      <div class="slot">${icon(40, 38, svg`<path d="M1 0 V7 H25 V0 M1 38 V32 H25 V38 M1 12 H25 V27 H1Z M37 0 V9 M37 20 V38" stroke="#000" stroke-width="2.2" fill="none"/><circle cx="37" cy="15" r="3.2"/>`)}</div>
      <div class="lines"></div>
      ${TASKS.map((t, i) => html`<div class="app ${t.run === "active" ? "active-app" : t.run ?? ""} ${i === 5 ? "mailapp" : ""}">${t.art}</div>`)}
      <div class="help">${icon(48, 42, svg`<circle cx="20" cy="20" r="20" fill="#fff"/><circle cx="20" cy="20" r="16.5" fill="#0f8fd6"/>${letter("?", 20, 31, 30, "#fff")}<circle cx="37.5" cy="30" r="10.5" fill="#f9a81a"/>${letter("i", 37.5, 37, 18, "#fff")}`)}</div>
      <div class="moon">${icon(49, 46, svg`<path d="M31 0 Q50 8 49 25 Q46 44 26 46 Q8 46 2 33 Q16 38 26 27 Q35 16 31 0Z" fill="#fbc618"/><path d="M31 0 Q50 8 49 25 Q48 32 43 37 Q45 15 31 0Z" fill="#ffe600"/><path d="M3 17 Q-2 12 3 8 Q3 3 9 4 Q14 0 19 5 Q25 8 21 14 Q20 19 13 17 Q7 21 3 17Z" fill="#b9e0f6"/>`)}</div>
      ${fit("33°F", 68, "temp")}
      ${icon(32, 18, svg`<path d="M1.5 17 L16 2 L30.5 17" stroke="#000" stroke-width="2.4" fill="none"/>`)}
      <div class="meet">${icon(30, 36, svg`<path d="M5 5 Q14 -3 24 5 M5 31 Q14 39 24 31" stroke="#000" stroke-width="2.2" fill="none"/><rect x="1.5" y="9" width="18" height="19" rx="4" fill="none" stroke="#000" stroke-width="2.4"/><path d="M20 17 L28 11 V26 L20 20" fill="none" stroke="#000" stroke-width="2"/>`)}</div>
      <div class="bat">${icon(40, 28, svg`<rect x="11" y="5" width="25" height="21" fill="none" stroke="#000" stroke-width="2.4"/><rect x="14" y="9" width="19" height="14"/><rect x="37" y="11" width="3" height="9"/><path d="M-1 3 H12 V12 Q12 16 6 16 T0 12 V3 M3 0 V4 M9 0 V4 M6 15 V28" stroke="#000" stroke-width="2.4" fill="#d3e1e8"/>`)}</div>
      <div class="vol">${icon(40, 36, svg`<path d="M1.5 12 H7 L14 5 V31 L7 24 H1.5Z" fill="none" stroke="#000" stroke-width="2.4"/><path d="M19 13 Q23 18 19 23" stroke="#000" stroke-width="2.2" fill="none"/><path d="M24 8 Q32 18 24 28 M30 3 Q43 18 30 33" stroke="#8f9aa0" stroke-width="2.2" fill="none"/>`)}</div>
      <div class="wifi">${icon(32, 30, svg`<g fill="none" stroke="#000" stroke-width="2.2"><path d="M1.5 30 Q2 3 31 1.5 M9 30 Q9 10 31 9 M17 30 Q17 17 31 16"/></g><circle cx="27" cy="26" r="3.4"/>`)}</div>
      <div class="clock">${fit("5:58 PM", 108)}${fit("11/22/2021", 150)}</div>
      <div class="note">${icon(58, 62, svg`<path d="M0 0 H40 V34 H16 L8 42 V34 H0Z"/><path d="M7 9 H33 M7 17 H33 M7 25 H22" stroke="#d3e1e8" stroke-width="2.4"/><circle cx="38" cy="38.5" r="19.5" fill="#c5cbd0" stroke="#55595e" stroke-width="1.6"/><path d="M38 38 V19 A19 19 0 0 0 19 38Z" fill="#8e9396"/>
        <text x="38" y="49" font-size="28" text-anchor="middle" fill="#000" stroke="#000" stroke-width=".6" font-family="Open Sans, sans-serif">2</text>`)}</div>
      <div class="peek"></div>
    </div>`;
  }

  render() {
    return html`<div class="screen">
      <div class="desktop">
        <span class="stray s1">F</span><span class="stray s2">F</span><i class="stray-icon"></i>
        <div class="window">${this.strip()}${this.nav()}${this.marks()}${this.page()}</div>
      </div>
      ${this.taskbar()}
    </div>`;
  }
}
